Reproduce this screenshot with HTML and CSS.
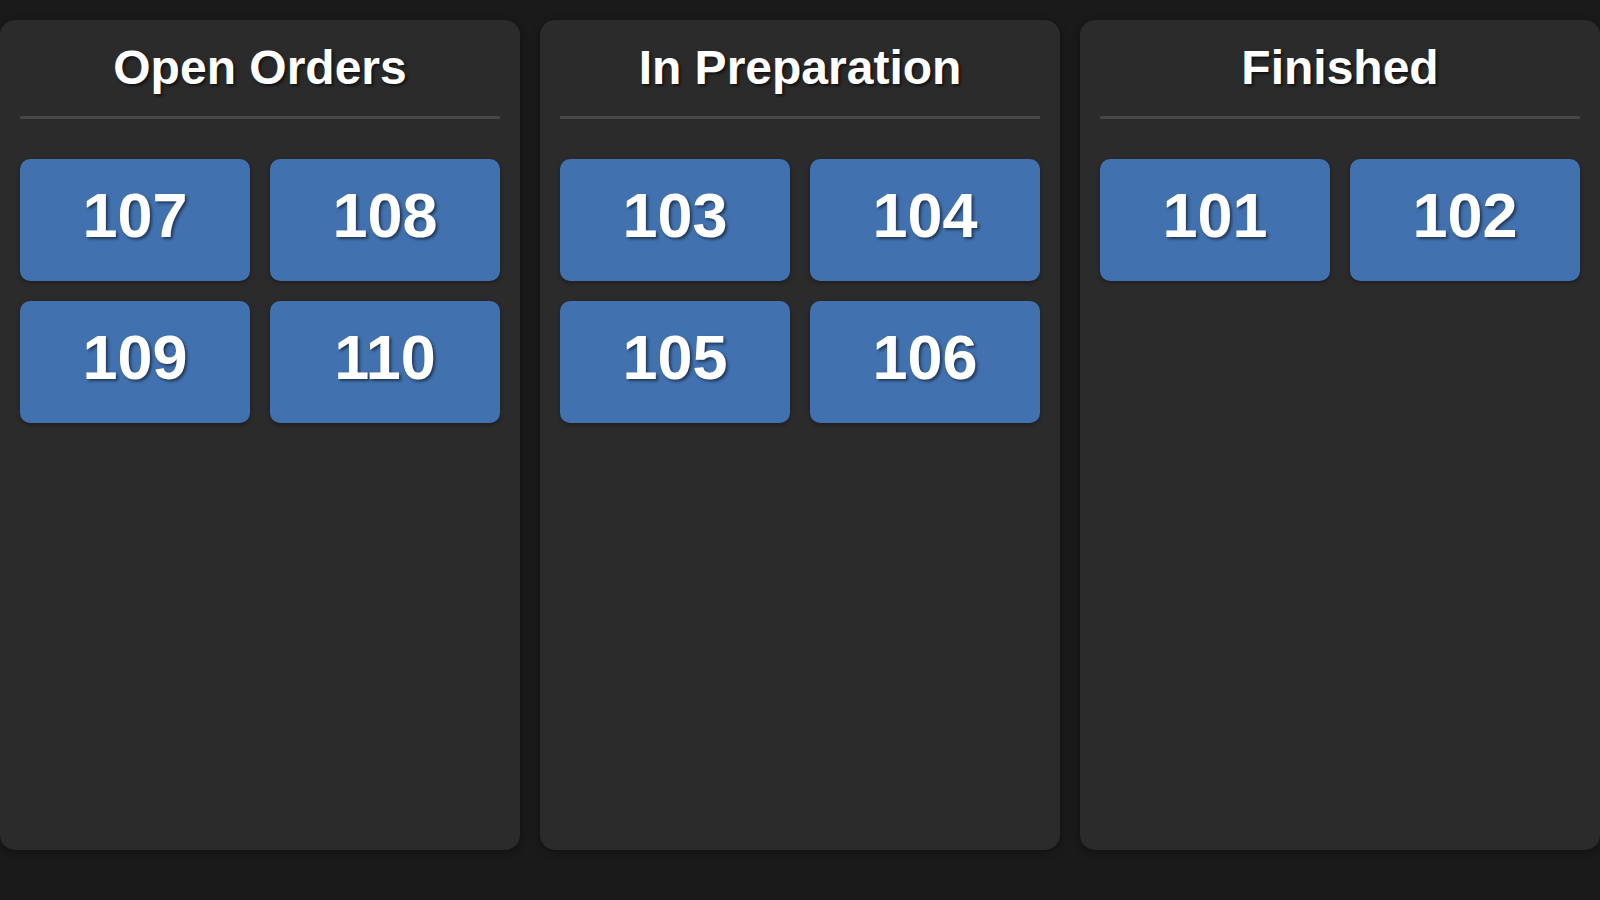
FILE: index.html
```html
<!DOCTYPE html>
<html>
<head>
  <title>Order Board</title>
  <meta charset="UTF-8"/>
  <link rel="stylesheet" href="styles.css">
</head>
<body>

  <div class="board">
    <div class="column">
      <h2 class="column-title">Open Orders</h2>
      <div class="orders">
        <div class="order">107</div>
        <div class="order">108</div>
        <div class="order">109</div>
        <div class="order">110</div>
      </div>
    </div>

    <div class="column">
      <h2 class="column-title">In Preparation</h2>
      <div class="orders">
        <div class="order">103</div>
        <div class="order">104</div>
        <div class="order">105</div>
        <div class="order">106</div>
      </div>
    </div>

    <div class="column">
      <h2 class="column-title">Finished</h2>
      <div class="orders">
        <div class="order">101</div>
        <div class="order">102</div>
      </div>
    </div>
  </div>

</body>
</html>
```

FILE: styles.css
```css
body {
  margin: 0;
  background-color: #1a1a1a;
  color: white;
  font-family: "Liberation Sans", Arial, sans-serif;
}

.board {
  display: grid;
  grid-template-columns: repeat(3, 1fr);
  gap: 20px;
  padding: 20px 0;
}

.column {
  height: 830px;
  box-sizing: border-box;
  padding: 20px;
  background-color: #2b2b2b;
  border-radius: 15px;
  box-shadow: 0 2px 8px rgba(0, 0, 0, 0.35);
}

.column-title {
  margin: 0 0 40px 0;
  padding-bottom: 21px;
  border-bottom: 3px solid #474747;
  font-size: 48px;
  text-align: center;
  text-shadow: 2px 2px 3px rgba(0, 0, 0, 0.6);
}

.orders {
  display: grid;
  grid-template-columns: repeat(2, 1fr);
  gap: 20px;
}

.order {
  padding: 20px 0 30px 0;
  background-color: #4171af;
  border-radius: 10px;
  font-size: 63px;
  font-weight: bold;
  text-align: center;
  text-shadow: 2px 2px 3px rgba(0, 0, 0, 0.5);
  box-shadow: 0 2px 4px rgba(0, 0, 0, 0.3);
}
```
